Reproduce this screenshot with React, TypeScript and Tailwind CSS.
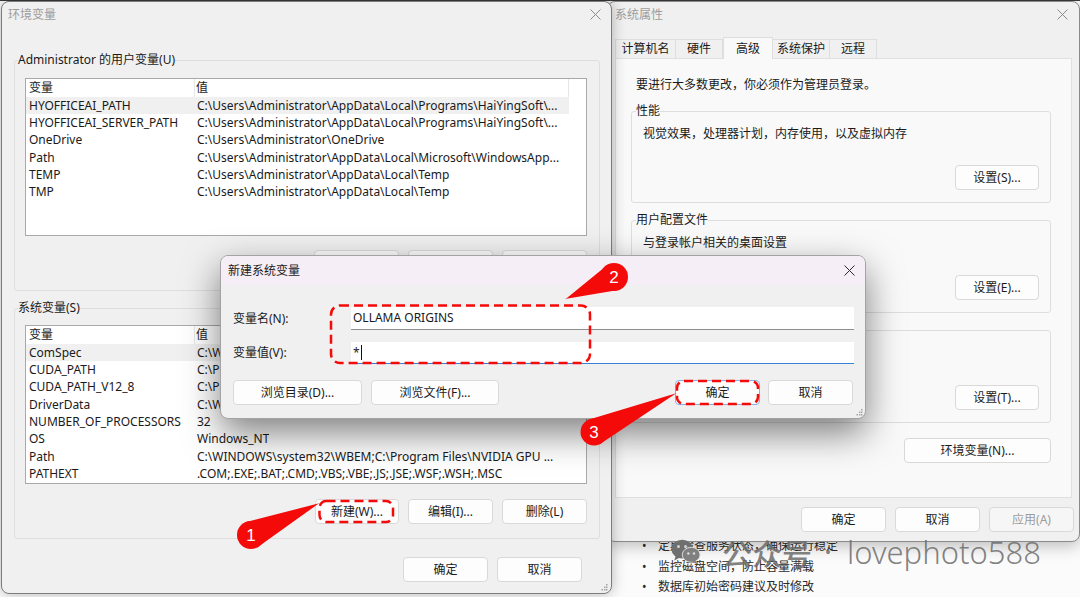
import React from 'react';

type Row = [string, string];

const USER_VARS: Row[] = [
  ['HYOFFICEAI_PATH', 'C:\\Users\\Administrator\\AppData\\Local\\Programs\\HaiYingSoft\\...'],
  ['HYOFFICEAI_SERVER_PATH', 'C:\\Users\\Administrator\\AppData\\Local\\Programs\\HaiYingSoft\\...'],
  ['OneDrive', 'C:\\Users\\Administrator\\OneDrive'],
  ['Path', 'C:\\Users\\Administrator\\AppData\\Local\\Microsoft\\WindowsApp...'],
  ['TEMP', 'C:\\Users\\Administrator\\AppData\\Local\\Temp'],
  ['TMP', 'C:\\Users\\Administrator\\AppData\\Local\\Temp'],
];

const SYSTEM_VARS: Row[] = [
  ['ComSpec', 'C:\\WINDOWS\\system32\\cmd.exe'],
  ['CUDA_PATH', 'C:\\Program Files\\NVIDIA GPU Computing Toolkit\\CUDA\\v12.8'],
  ['CUDA_PATH_V12_8', 'C:\\Program Files\\NVIDIA GPU Computing Toolkit\\CUDA\\v12.8'],
  ['DriverData', 'C:\\Windows\\System32\\Drivers\\DriverData'],
  ['NUMBER_OF_PROCESSORS', '32'],
  ['OS', 'Windows_NT'],
  ['Path', 'C:\\WINDOWS\\system32\\WBEM;C:\\Program Files\\NVIDIA GPU ...'],
  ['PATHEXT', '.COM;.EXE;.BAT;.CMD;.VBS;.VBE;.JS;.JSE;.WSF;.WSH;.MSC'],
];

const TABS = [
  { label: '计算机名', w: 'w-[61px]' },
  { label: '硬件', w: 'w-[47px]' },
  { label: '高级', w: 'w-[50px]', active: true },
  { label: '系统保护', w: 'w-[57px]' },
  { label: '远程', w: 'w-[47px]' },
];

function CloseGlyph({ color }: { color: string }) {
  return (
    <svg width="11" height="11" viewBox="0 0 11 11">
      <path d="M0.5 0.5L10.5 10.5M10.5 0.5L0.5 10.5" stroke={color} strokeWidth="1" />
    </svg>
  );
}

function Grip() {
  return (
    <svg width="7" height="7" viewBox="0 0 7 7" fill="#a3a3a3">
      <rect x="5" y="0" width="1.5" height="1.5" />
      <rect x="3" y="2.5" width="1.5" height="1.5" />
      <rect x="5" y="2.5" width="1.5" height="1.5" />
      <rect x="0.5" y="5" width="1.5" height="1.5" />
      <rect x="3" y="5" width="1.5" height="1.5" />
      <rect x="5" y="5" width="1.5" height="1.5" />
    </svg>
  );
}

function WinButton({
  label,
  className = '',
  focused = false,
  disabled = false,
}: {
  label: string;
  className?: string;
  focused?: boolean;
  disabled?: boolean;
}) {
  return (
    <div
      className={`flex h-[25px] shrink-0 items-center justify-center rounded-[4px] border ${
        focused ? 'border-[#7db3e8]' : 'border-[#d9d9d9]'
      } ${disabled ? 'bg-[#f6f6f6] text-[#9c9c9c]' : 'bg-[#fdfdfd] text-[#1b1b1b]'} ${className}`}
    >
      {label}
    </div>
  );
}

function VarList({ rows, className }: { rows: Row[]; className: string }) {
  return (
    <div className={`overflow-hidden border border-[#a9a9a9] bg-white ${className}`}>
      <div className="flex h-[18px] w-[543px] border-r border-[#e6e6e6]">
        <div className="flex w-[169px] items-center border-r border-[#e6e6e6] pl-[3px]">变量</div>
        <div className="flex items-center pl-[1px]">值</div>
      </div>
      {rows.map(([name, value], i) => (
        <div
          key={name + i}
          className={`flex h-[17.33px] w-[543px] items-center ${i === 0 ? 'bg-[#f0f0f0]' : ''}`}
        >
          <div className="w-[169px] shrink-0 whitespace-nowrap pl-[3px]">{name}</div>
          <div className="overflow-hidden whitespace-nowrap pl-[2px]">{value}</div>
        </div>
      ))}
    </div>
  );
}

function GroupBox({
  title,
  className,
  children,
}: {
  title: string;
  className: string;
  children: React.ReactNode;
}) {
  return (
    <fieldset className={`rounded-[3px] border border-[#dedede] ${className}`}>
      <legend className="leading-[16px]">{title}</legend>
      {children}
    </fieldset>
  );
}

function Bubble({ cx, cy, r, tx, ty, n }: { cx: number; cy: number; r: number; tx: number; ty: number; n: string }) {
  const dx = tx - cx;
  const dy = ty - cy;
  const len = Math.hypot(dx, dy);
  const px = (-dy / len) * r;
  const py = (dx / len) * r;
  const ux = (dx / len) * 1.2;
  const uy = (dy / len) * 1.2;
  const d = `M${cx + px} ${cy + py} L${tx + ux - py * 0.08} ${ty + uy + px * 0.08} L${tx + ux + py * 0.08} ${
    ty + uy - px * 0.08
  } L${cx - px} ${cy - py} Z`;
  return (
    <g>
      <path d={d} fill="#f50a0a" />
      <circle cx={cx} cy={cy} r={r} fill="#f50a0a" />
      <text
        x={cx}
        y={cy + 6}
        textAnchor="middle"
        fontSize="17"
        fill="#ffffff"
        fontFamily="Liberation Sans, Arial, sans-serif"
      >
        {n}
      </text>
    </g>
  );
}

function Annotations() {
  return (
    <svg className="pointer-events-none absolute inset-0 z-50" width="1080" height="597" viewBox="0 0 1080 597">
      <g fill="none" stroke="#f50a0a" strokeWidth="2.5" strokeDasharray="9 5">
        <rect x="331" y="305.5" width="259" height="57.5" rx="9" />
        <rect x="677" y="381" width="81" height="23" rx="7" />
        <rect x="319.5" y="501" width="73.5" height="21" rx="7" />
      </g>
      <Bubble cx={251} cy={535} r={14} tx={318} ty={504} n="1" />
      <Bubble cx={614} cy={277} r={14} tx={567} ty={298} n="2" />
      <Bubble cx={594} cy={432} r={13.5} tx={675} ty={394} n="3" />
    </svg>
  );
}

function EnvVarsWindow() {
  return (
    <div className="absolute left-[1px] top-[1px] z-20 flex h-[593px] w-[611px] flex-col rounded-lg border border-[#7c7c7c] bg-[#f0f0f0] shadow-[0_0_14px_rgba(0,0,0,0.28)]">
      <div className="flex h-[25px] items-center justify-between pl-[6px] pr-[10px] text-[#9d9d9d]">
        <span>环境变量</span>
        <CloseGlyph color="#8c8c8c" />
      </div>

      <GroupBox title="Administrator 的用户变量(U)" className="ml-[12px] mt-[25px] w-[586px] px-[3px] pb-[15px]">
        <div className="pl-[7px] pr-[9px]">
          <VarList rows={USER_VARS} className="mt-[10px] h-[158px]" />
          <div className="mt-[14px] flex justify-end gap-[9px]">
            <WinButton label="新建(W)..." className="w-[85px]" />
            <WinButton label="编辑(I)..." className="w-[85px]" />
            <WinButton label="删除(L)" className="w-[85px]" />
          </div>
        </div>
      </GroupBox>

      <GroupBox title="系统变量(S)" className="ml-[12px] mt-[9px] w-[586px] px-[3px] pb-[14px]">
        <div className="pl-[7px] pr-[9px]">
          <VarList rows={SYSTEM_VARS} className="mt-[9px] h-[159px]" />
          <div className="mt-[15px] flex justify-end gap-[9px]">
            <WinButton label="新建(W)..." className="w-[84px]" />
            <WinButton label="编辑(I)..." className="w-[85px]" />
            <WinButton label="删除(L)" className="w-[85px]" />
          </div>
        </div>
      </GroupBox>

      <div className="mt-[18px] flex justify-end gap-[9px] pr-[29px]">
        <WinButton label="确定" className="w-[85px]" />
        <WinButton label="取消" className="w-[85px]" />
      </div>

      <div className="mt-auto flex justify-end pb-[2px] pr-[3px]">
        <Grip />
      </div>
    </div>
  );
}

function SystemPropsWindow() {
  return (
    <div className="absolute left-[607px] top-[1px] z-10 flex h-[541px] w-[473px] flex-col rounded-lg border border-[#8a8a8a] bg-[#f0f0f0] shadow-[0_4px_16px_rgba(0,0,0,0.25)]">
      <div className="flex h-[25px] items-center justify-between pl-[7px] pr-[11px] text-[#9d9d9d]">
        <span>系统属性</span>
        <CloseGlyph color="#8c8c8c" />
      </div>

      {/* tab strip */}
      <div className="ml-[7px] mt-[10px] flex h-[21px] items-end">
        {TABS.map((t) =>
          t.active ? (
            <div
              key={t.label}
              className={`relative z-10 -mb-px flex h-[22px] items-start justify-center border border-b-0 border-[#dedede] bg-[#f9f9f9] pt-[2px] ${t.w}`}
            >
              {t.label}
            </div>
          ) : (
            <div
              key={t.label}
              className={`flex h-[19px] items-center justify-center border-r border-t border-[#dedede] bg-[#f0f0f0] ${t.w} first:border-l`}
            >
              {t.label}
            </div>
          ),
        )}
      </div>

      {/* tab page */}
      <div className="mx-[7px] flex h-[440px] flex-col border border-[#e0e0e0] bg-[#f9f9f9] pl-[15px] pr-[20px] pt-[18px]">
        <p className="ml-[5px] leading-[16px]">要进行大多数更改，你必须作为管理员登录。</p>

        <GroupBox title="性能" className="mt-[10px] px-[4px] pb-[12px]">
          <div className="px-[7px]">
            <p className="mt-[7px] leading-[16px]">视觉效果，处理器计划，内存使用，以及虚拟内存</p>
            <div className="mt-[23px] flex justify-end">
              <WinButton label="设置(S)..." className="w-[84px]" />
            </div>
          </div>
        </GroupBox>

        <GroupBox title="用户配置文件" className="mt-[9px] px-[4px] pb-[12px]">
          <div className="px-[7px]">
            <p className="mt-[7px] leading-[16px]">与登录帐户相关的桌面设置</p>
            <div className="mt-[24px] flex justify-end">
              <WinButton label="设置(E)..." className="w-[84px]" />
            </div>
          </div>
        </GroupBox>

        <GroupBox title="启动和故障恢复" className="mt-[9px] px-[4px] pb-[12px]">
          <div className="px-[7px]">
            <p className="mt-[7px] leading-[16px]">系统启动、系统故障和调试信息</p>
            <div className="mt-[24px] flex justify-end">
              <WinButton label="设置(T)..." className="w-[84px]" />
            </div>
          </div>
        </GroupBox>

        <div className="mt-[15px] flex justify-end">
          <WinButton label="环境变量(N)..." className="w-[147px]" />
        </div>
      </div>

      <div className="mt-[9px] flex justify-end gap-[9px] pr-[5px]">
        <WinButton label="确定" className="w-[85px]" />
        <WinButton label="取消" className="w-[85px]" />
        <WinButton label="应用(A)" className="w-[85px]" disabled />
      </div>
    </div>
  );
}

function NewVariableDialog() {
  return (
    <div className="absolute left-[220px] top-[255px] z-30 flex h-[164px] w-[646px] flex-col overflow-hidden rounded-lg border border-[#a3a3a3] bg-[#f0f0f0] shadow-[0_14px_36px_rgba(0,0,0,0.5)]">
      <div className="flex h-[29px] shrink-0 items-center justify-between bg-[#f6eef6] pl-[7px] pr-[10px]">
        <span>新建系统变量</span>
        <CloseGlyph color="#2b2b2b" />
      </div>

      <div className="relative flex flex-1 flex-col pl-[12px] pr-[11px] pt-[22px]">
        <div className="flex h-[23px] items-center">
          <div className="w-[118px] shrink-0">变量名(N):</div>
          <div className="flex h-full flex-1 items-center border-b border-[#8e8e8e] bg-white pl-[2px]">OLLAMA ORIGINS</div>
        </div>
        <div className="mt-[12px] flex h-[22px] items-center">
          <div className="w-[118px] shrink-0">变量值(V):</div>
          <div className="flex h-full flex-1 items-center border-b border-[#3a80d2] bg-white pl-[2px]">
            <span>*</span>
            <span className="ml-[1px] h-[15px] w-px bg-[#111]" />
          </div>
        </div>

        <div className="mt-[16px] flex pr-[1px]">
          <WinButton label="浏览目录(D)..." className="w-[129px]" />
          <WinButton label="浏览文件(F)..." className="ml-[9px] w-[128px]" />
          <WinButton label="确定" className="ml-auto w-[85px]" focused />
          <WinButton label="取消" className="ml-[8px] w-[85px]" />
        </div>

        <div className="absolute bottom-[2px] right-[2px]">
          <Grip />
        </div>
      </div>
    </div>
  );
}

function WeChatMark() {
  return (
    <svg width="30" height="28" viewBox="0 0 32 28">
      <ellipse cx="12" cy="11" rx="11.5" ry="10" fill="#6f6f6f" />
      <path d="M5 18 L3.5 23 L10 19.5 Z" fill="#6f6f6f" />
      <ellipse cx="21.5" cy="17" rx="9.5" ry="8" fill="#808080" stroke="#e0e0e0" strokeWidth="1" />
      <path d="M26 23 L28 27 L22 24.5 Z" fill="#808080" />
      <circle cx="8" cy="8" r="1.6" fill="#d2d2d2" />
      <circle cx="15.5" cy="8" r="1.6" fill="#d2d2d2" />
      <circle cx="18.5" cy="15.5" r="1.3" fill="#dadada" />
      <circle cx="24.5" cy="15.5" r="1.3" fill="#dadada" />
    </svg>
  );
}

export default function App() {
  return (
    <div className="relative h-[597px] w-[1080px] overflow-hidden bg-[#fbfbfb] font-['Noto_Sans','Noto_Sans_CJK_SC',sans-serif] text-[12px] text-[#1a1a1a]">
      <div className="absolute inset-x-0 top-0 h-[1px] bg-[#3a3a3a]" />

      {/* article text behind the windows */}
      <ul className="absolute left-[640px] top-[536px] flex flex-col text-[12px] leading-[20.7px] text-[#2a2a2a]">
        <li className="flex">
          <span className="w-[18px] pl-[2px]">•</span>定期检查服务状态，确保运行稳定
        </li>
        <li className="flex">
          <span className="w-[18px] pl-[2px]">•</span>监控磁盘空间，防止容量满载
        </li>
        <li className="flex">
          <span className="w-[18px] pl-[2px]">•</span>数据库初始密码建议及时修改
        </li>
      </ul>

      <SystemPropsWindow />
      <EnvVarsWindow />
      <NewVariableDialog />

      {/* account watermark */}
      <div className="pointer-events-none absolute left-[671px] top-[532px] z-40 flex h-[40px] items-center text-[#6c6c6c]/85">
        <WeChatMark />
        <span className="ml-[21px] font-['Noto_Sans_CJK_SC',sans-serif] text-[30px] font-medium leading-[40px]">公众号</span>
        <span className="ml-[12px] text-[30px] font-normal leading-[40px]">·</span>
        <span className="ml-[15px] text-[31px] font-light leading-[40px]">lovephoto588</span>
      </div>

      <Annotations />
    </div>
  );
}
